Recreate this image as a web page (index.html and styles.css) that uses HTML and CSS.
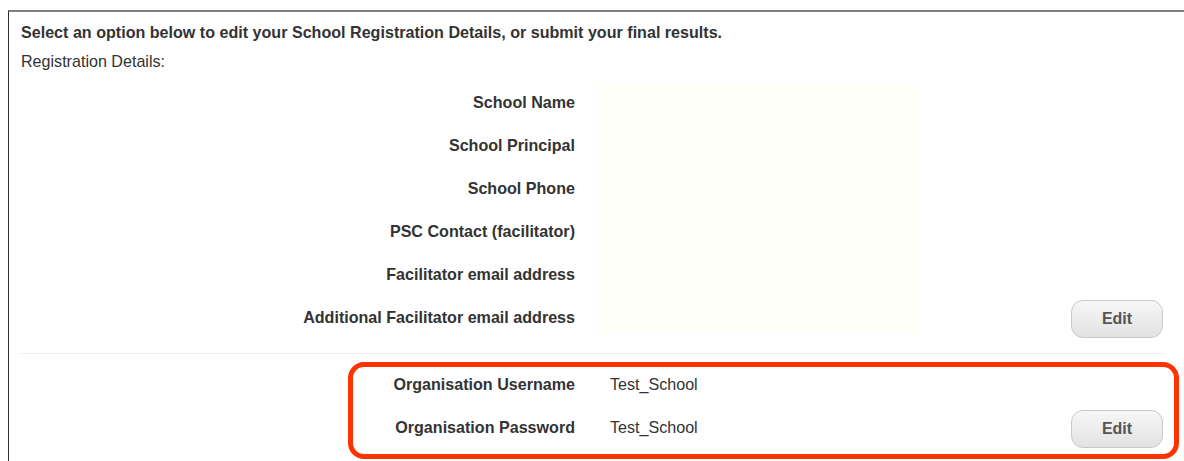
FILE: index.html
```html
<!DOCTYPE html>
<html lang="en">
<head>
<meta charset="utf-8">
<title>School Registration Details</title>
<link rel="stylesheet" href="styles.css">
</head>
<body>
<div class="panel">
  <p class="intro">Select an option below to edit your School Registration Details, or submit your final results.</p>
  <p class="subhead">Registration Details:</p>

  <div class="details">
    <div class="label">School Name</div>
    <div class="label">School Principal</div>
    <div class="label">School Phone</div>
    <div class="label">PSC Contact (facilitator)</div>
    <div class="label">Facilitator email address</div>
    <div class="label">Additional Facilitator email address</div>
    <div class="values"></div>
    <div class="action"><button class="btn" type="button">Edit</button></div>
  </div>

  <hr class="divider">

  <div class="details login">
    <div class="label">Organisation Username</div>
    <div class="value">Test_School</div>
    <div class="label">Organisation Password</div>
    <div class="value">Test_School</div>
    <div class="action"><button class="btn" type="button">Edit</button></div>
    <div class="highlight"></div>
  </div>
</div>
</body>
</html>
```
FILE: styles.css
```css
html, body {
  margin: 0;
  background: #ffffff;
}

body {
  font-family: "Liberation Sans", Arial, sans-serif;
  font-size: 16.1px;
  color: #333333;
}

.panel {
  margin: 10px 0 0 8px;
  border-top: 2px solid #808080;
  border-left: 1px solid #2e2e2e;
  padding: 10px 21px 0 12px;
  min-height: 460px;
  box-sizing: border-box;
}

.intro {
  margin: 0;
  line-height: 20px;
  font-weight: bold;
}

.subhead {
  margin: 9px 0 0;
  line-height: 20px;
}

.details {
  display: grid;
  grid-template-columns: 554px 320px 1fr;
  grid-auto-rows: 43px;
  column-gap: 23px;
  margin-top: 10px;
}

.label {
  grid-column: 1;
  text-align: right;
  font-weight: bold;
  line-height: 43px;
}

.values {
  grid-column: 2;
  grid-row: 1 / 7;
  margin: 2px 0 5px;
  background: #fffffa;
}

.value {
  grid-column: 2;
  padding-left: 12px;
  line-height: 43px;
}

.action {
  grid-column: 3;
  grid-row: 6;
  display: flex;
  justify-content: flex-end;
  align-items: center;
  padding-top: 2px;
}

.login .action {
  grid-row: 2;
}

.btn {
  width: 92px;
  height: 38px;
  border: 1px solid #c8c8c8;
  border-radius: 12px;
  background: linear-gradient(#f7f7f7, #e2e2e2);
  font-family: "Liberation Sans", Arial, sans-serif;
  font-size: 16px;
  font-weight: bold;
  color: #555555;
  padding: 0;
}

.divider {
  border: 0;
  border-top: 1px solid #ececec;
  margin: 14px 0 9px;
}

.login {
  position: relative;
  margin-top: 0;
}

/* red callout around the login credentials */
.highlight {
  position: absolute;
  left: 327px;
  top: -1px;
  width: 831px;
  height: 97px;
  box-sizing: border-box;
  border: 5px solid #ff3300;
  border-radius: 16px;
  pointer-events: none;
}
```
